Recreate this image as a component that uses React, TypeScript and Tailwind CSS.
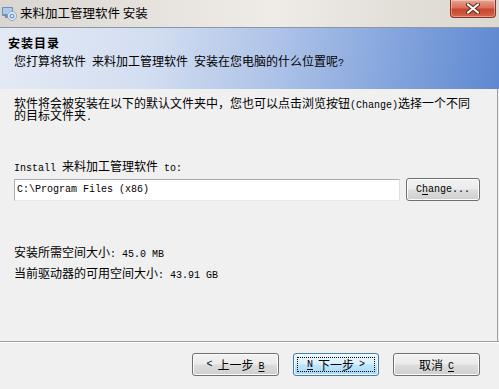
import React from "react";

const cjk = "font-['Noto_Sans_CJK_SC',sans-serif]";

// ASCII runs look half-width monospace in the original (SimSun), so render them in a mono font
function Mixed({ text }: { text: string }) {
  const parts = text.match(/[\x00-\x7f]+|[^\x00-\x7f]+/g) || [];
  return (
    <>
      {parts.map((p, i) =>
        /^[\x00-\x7f]/.test(p) ? (
          <span key={i} className="font-['Liberation_Mono',monospace] text-[10px] leading-[0px] whitespace-pre">
            {p}
          </span>
        ) : (
          <span key={i}>{p}</span>
        )
      )}
    </>
  );
}

const U = ({ c }: { c: string }) => (
  <span className="font-['Liberation_Mono',monospace] text-[10px] underline underline-offset-2">{c}</span>
);

const btn =
  "relative h-[23px] rounded-[3px] border text-[12px] leading-none text-black flex items-center justify-center shadow-[inset_0_0_0_1px_#fcfcfc]";
const btnNormal =
  "border-[#707070] bg-[linear-gradient(#f2f2f2_0%,#ebebeb_48%,#dddddd_52%,#cfcfcf_100%)]";
const btnDefault =
  "border-[#3c7fb1] bg-[linear-gradient(#eaf6fd_0%,#d9f0fc_48%,#bee6fd_52%,#a7d9f5_100%)] shadow-[inset_0_0_0_1px_#b9e3f7]";

const AppIcon = () => (
  <svg width="16" height="16" viewBox="0 0 16 16">
    <rect x="1" y="2" width="11" height="9" rx="1" fill="#6f8fb5" />
    <rect x="2" y="3" width="9" height="6" fill="#a9cbee" />
    <rect x="4" y="11" width="5" height="2" fill="#7d8b9c" />
    <circle cx="11" cy="11" r="4.5" fill="#e9eef4" stroke="#8a99ab" strokeWidth="0.8" />
    <circle cx="11" cy="11" r="2.6" fill="#6fa3e0" />
    <circle cx="11" cy="11" r="1" fill="#ffffff" />
  </svg>
);

const CloseX = () => (
  <svg width="14" height="11" viewBox="0 0 14 11">
    <path d="M2 1.5 L12 9.5 M12 1.5 L2 9.5" stroke="#5a2418" strokeWidth="4" strokeLinecap="round" />
    <path d="M2 1.5 L12 9.5 M12 1.5 L2 9.5" stroke="#ffffff" strokeWidth="2.2" strokeLinecap="round" />
  </svg>
);

export default function App() {
  return (
    <div className={`w-[499px] h-[389px] bg-[#f0f0f0] flex flex-col overflow-hidden text-black ${cjk}`}>
      {/* title bar */}
      <div className="h-[27px] flex items-start bg-[linear-gradient(90deg,#d9d6d1_0%,#e6e3de_30%,#efece7_55%,#e2ded8_80%,#dcd8d2_100%)]">
        <div className="mt-[5px] ml-[1px]">
          <AppIcon />
        </div>
        <div className="ml-[3px] mt-[5px] text-[12.5px] leading-[16px] text-black">来料加工管理软件 安装</div>
        <div className="flex-1" />
        <div className="mr-[3px] w-[46px] h-[18px] rounded-b-[4px] border border-t-0 border-[#8a3322] bg-[linear-gradient(#e9a391_0%,#d9705a_45%,#c8452d_55%,#d2664c_100%)] shadow-[inset_0_0_0_1px_rgba(255,255,255,0.35)] flex items-center justify-center">
          <CloseX />
        </div>
      </div>

      {/* header */}
      <div className="h-[62px] border-t border-[#8c96a4] pl-[8px] pt-[7px] bg-[linear-gradient(100deg,#e4eaf5_0%,#d3def1_30%,#aec3e8_55%,#84a5dd_78%,#5e88d0_100%)]">
        <div className="text-[12px] leading-[16px] font-bold tracking-[1px]">安装目录</div>
        <div className="mt-[2px] ml-[6px] text-[12px] leading-[16px]">
          <Mixed text="您打算将软件 来料加工管理软件 安装在您电脑的什么位置呢?" />
        </div>
      </div>

      {/* body */}
      <div className="h-[252px] w-[498px] border-r border-[#a0a0a0] pl-[14px] pt-[8px] flex flex-col text-[12px]">
        <div className="leading-[12px]">
          <Mixed text="软件将会被安装在以下的默认文件夹中，您也可以点击浏览按钮(Change)选择一个不同" />
          <br />
          <Mixed text="的目标文件夹." />
        </div>
        <div className="mt-[38px] leading-[14px]">
          <Mixed text="Install 来料加工管理软件 to:" />
        </div>
        <div className="mt-[5px] flex items-center">
          <div className="w-[386px] h-[22px] bg-white border border-[#abadb3] border-b-[#e3e9ef] border-r-[#dbdfe6] pl-[2px] flex items-center font-['Liberation_Mono',monospace] text-[10px] whitespace-pre">
            C:\Program Files (x86)
          </div>
          <div className={`${btn} ${btnNormal} ml-[6px] w-[74px]`}>
            <span className="font-['Liberation_Mono',monospace] text-[10px]">
              C<span className="underline underline-offset-2">h</span>ange...
            </span>
          </div>
        </div>
        <div className="mt-[44px] leading-[14px]">
          <Mixed text="安装所需空间大小: 45.0 MB" />
        </div>
        <div className="mt-[7px] leading-[14px]">
          <Mixed text="当前驱动器的可用空间大小: 43.91 GB" />
        </div>
      </div>

      {/* separator */}
      <div className="h-px bg-[#a0a0a0]" />
      <div className="h-px bg-white" />

      {/* footer buttons */}
      <div className="flex justify-end gap-[14px] pr-[19px] pt-[10px]">
        <div className={`${btn} ${btnNormal} w-[87px]`}>
          <span className="font-['Liberation_Mono',monospace] text-[10px]">&lt;</span>
          <span className="ml-[5px]">上一步</span>
          <span className="ml-[5px]"><U c="B" /></span>
        </div>
        <div className={`${btn} ${btnDefault} w-[86px]`}>
          <span className="absolute inset-[3px] border border-dotted border-black" />
          <U c="N" />
          <span className="ml-[5px]">下一步</span>
          <span className="ml-[5px] font-['Liberation_Mono',monospace] text-[10px]">&gt;</span>
        </div>
        <div className={`${btn} ${btnNormal} w-[87px]`}>
          <span>取消</span>
          <span className="ml-[5px]"><U c="C" /></span>
        </div>
      </div>
    </div>
  );
}
